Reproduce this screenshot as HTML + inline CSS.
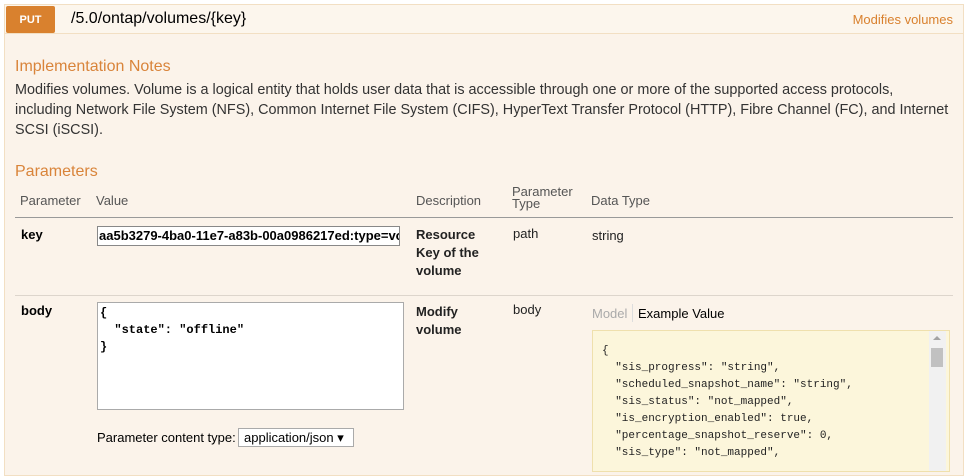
<!DOCTYPE html>
<html><head><style>
body{margin:0;background:#fff;font-family:"Liberation Sans",sans-serif;width:969px;height:465px;overflow:hidden;position:relative}
.box{position:absolute;left:4px;top:4px;width:958px;height:470px;background:#fbf3ea;border:1px solid #f2dfc3}
.hdr{position:absolute;left:0;top:0;width:958px;height:28px;background:#fcf6ed;border-bottom:1px solid #f2dfc3}
.put{position:absolute;left:1px;top:1px;width:49px;height:27px;background:#d9812e;color:#fff;font-size:11px;font-weight:bold;text-align:center;line-height:28px;border-radius:2px}
.path{position:absolute;left:66px;top:5px;font-size:16px;color:#000}
.sum{position:absolute;right:10px;top:7px;font-size:13px;color:#d9812e}
.a{position:absolute;white-space:nowrap}
h{position:absolute;font-size:16px;color:#d9843a}
.t{font-size:14px;color:#333;line-height:20px}
.th{font-size:13px;color:#555}
.b{font-size:13px;font-weight:bold;color:#000}
.line{position:absolute;height:1px;left:15px;width:938px;background:#c8c0b8}
.mono{font-family:"Liberation Mono",monospace}
</style></head><body>
<div class="box">
<div class="hdr"><div class="put">PUT</div><div class="path">/5.0/ontap/volumes/{key}</div><div class="sum">Modifies volumes</div></div>
</div>
<h style="left:15px;top:58px">Implementation Notes</h>
<div class="a t" style="left:15px;top:80px;font-size:14.4px">Modifies volumes. Volume is a logical entity that holds user data that is accessible through one or more of the supported access protocols,<br>including Network File System (NFS), Common Internet File System (CIFS), HyperText Transfer Protocol (HTTP), Fibre Channel (FC), and Internet<br>SCSI (iSCSI).</div>
<h style="left:15px;top:163px">Parameters</h>
<div class="a th" style="left:20px;top:193px">Parameter</div>
<div class="a th" style="left:96px;top:193px">Value</div>
<div class="a th" style="left:416px;top:193px">Description</div>
<div class="a th" style="left:512px;top:186px;line-height:12px">Parameter<br>Type</div>
<div class="a th" style="left:591px;top:193px">Data Type</div>
<div class="line" style="top:217px;background:#999"></div>
<div class="a b" style="left:21px;top:227px">key</div>
<div class="a" style="left:97px;top:226px;width:300px;height:18px;border:1px solid #888;background:#fff;overflow:hidden;font-size:13px;font-weight:bold;line-height:18px;padding-left:1px">aa5b3279-4ba0-11e7-a83b-00a0986217ed:type=volume</div>
<div class="a b" style="left:416px;top:226px;line-height:18px;color:#222">Resource<br>Key of the<br>volume</div>
<div class="a" style="left:513px;top:226px;font-size:13px;color:#222">path</div>
<div class="a" style="left:592px;top:228px;font-size:13px;color:#222">string</div>
<div class="line" style="top:295px;background:#ddd5cc"></div>
<div class="a b" style="left:21px;top:303px">body</div>
<div class="a mono" style="left:97px;top:302px;width:303px;height:104px;border:1px solid #aaa;background:#fff;font-size:12px;font-weight:bold;line-height:17px;padding:2px 0 0 2px;white-space:pre">{
  "state": "offline"
}</div>
<div class="a b" style="left:416px;top:303px;line-height:18px;color:#222">Modify<br>volume</div>
<div class="a" style="left:513px;top:302px;font-size:13px;color:#222">body</div>
<div class="a" style="left:97px;top:430px;font-size:13px;color:#000">Parameter content type:</div>
<div class="a" style="left:238px;top:428px;border:1px solid #aaa;background:#fff;font-size:13px;line-height:17px;padding-left:5px;box-sizing:border-box;width:116px;height:19px">application/json ▾</div>
<div class="a" style="left:592px;top:306px;font-size:13px;color:#aaa">Model</div>
<div class="a" style="left:632px;top:304px;width:1px;height:18px;background:#ddd"></div>
<div class="a" style="left:638px;top:306px;font-size:13px;color:#000">Example Value</div>
<div class="a" style="left:592px;top:330px;width:356px;height:140px;background:#fcf6db;border:1px solid #efe0ad"></div>
<div class="a" style="left:929px;top:331px;width:17px;height:140px;background:#f1f1f1"></div>
<div class="a" style="left:931px;top:348px;width:12px;height:19px;background:#c1c1c1"></div>
<div class="a" style="left:933px;top:336px;width:0;height:0;border-left:4px solid transparent;border-right:4px solid transparent;border-bottom:4px solid #a3a3a3"></div>
<div class="a mono" style="left:602px;top:343px;font-size:11px;line-height:17px;color:#222;white-space:pre">{
  "sis_progress": "string",
  "scheduled_snapshot_name": "string",
  "sis_status": "not_mapped",
  "is_encryption_enabled": true,
  "percentage_snapshot_reserve": 0,
  "sis_type": "not_mapped",</div>
</body></html>
